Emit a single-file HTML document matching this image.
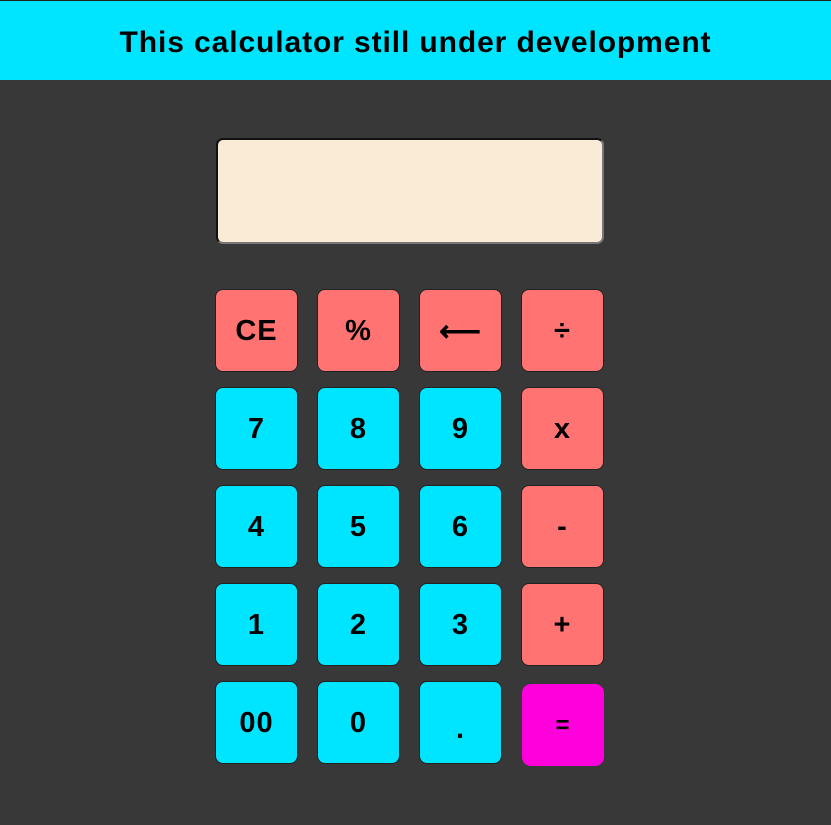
<!DOCTYPE html>
<html><head><style>
body{margin:0;width:831px;height:825px;background:#383838;font-family:"Liberation Sans",sans-serif;position:relative;overflow:hidden}
.hdr{position:absolute;left:0;top:0;width:831px;height:80px;background:#00e5ff;border-top:1px solid #222;box-sizing:border-box;text-align:center;line-height:84px;font-size:30px;letter-spacing:0.9px;font-weight:bold;color:#000}
.disp{position:absolute;left:216px;top:138px;width:388px;height:106px;box-sizing:border-box;background:#faebd7;border-radius:7px;border:2px solid;border-color:#111 #777 #777 #111}
.b{position:absolute;width:83px;height:83px;box-sizing:border-box;border:1px solid #222;border-radius:8px;display:flex;align-items:center;justify-content:center;font-size:29px;font-weight:bold;color:#000;padding-top:2px;letter-spacing:1px}
.r{background:#ff7373}.c{background:#00e5ff}.m{background:#ff00dd;border:none;border-radius:9px}
</style></head><body>
<div class="hdr">This calculator still under development</div>
<div class="disp"></div>
<div class="b r" style="left:215px;top:289px">CE</div>
<div class="b r" style="left:317px;top:289px">%</div>
<div class="b r" style="left:419px;top:289px">⟵</div>
<div class="b r" style="left:521px;top:289px">÷</div>
<div class="b c" style="left:215px;top:387px">7</div>
<div class="b c" style="left:317px;top:387px">8</div>
<div class="b c" style="left:419px;top:387px">9</div>
<div class="b r" style="left:521px;top:387px">x</div>
<div class="b c" style="left:215px;top:485px">4</div>
<div class="b c" style="left:317px;top:485px">5</div>
<div class="b c" style="left:419px;top:485px">6</div>
<div class="b r" style="left:521px;top:485px">-</div>
<div class="b c" style="left:215px;top:583px">1</div>
<div class="b c" style="left:317px;top:583px">2</div>
<div class="b c" style="left:419px;top:583px">3</div>
<div class="b r" style="left:521px;top:583px">+</div>
<div class="b c" style="left:215px;top:681px">00</div>
<div class="b c" style="left:317px;top:681px">0</div>
<div class="b c" style="left:419px;top:681px;padding-top:14px">.</div>
<div class="b m" style="left:522px;top:684px;width:82px;height:82px;font-size:24px">=</div>
</body></html>
